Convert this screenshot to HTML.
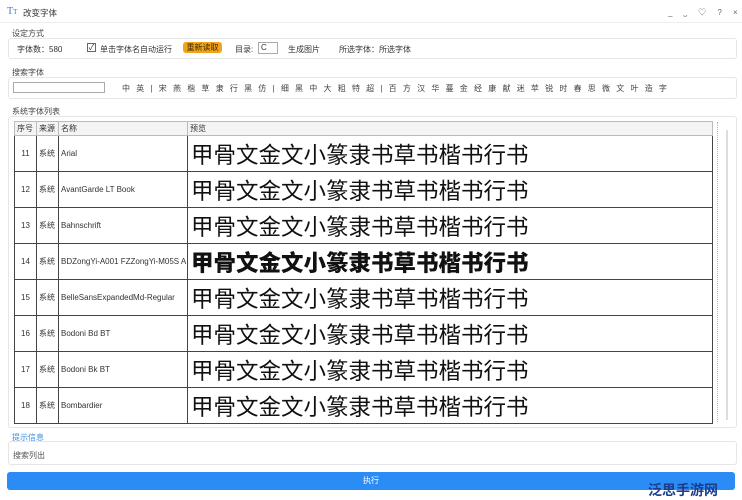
<!DOCTYPE html>
<html><head><meta charset="utf-8"><style>
*{margin:0;padding:0;box-sizing:border-box}
body{width:742px;height:500px;background:#fff;font-family:"Liberation Sans","Noto Sans CJK SC",sans-serif;font-size:8px;color:#333;position:relative;overflow:hidden}
.a{position:absolute}
.box{position:absolute;border:1px solid #e6e6e6;border-radius:3px;background:#fff}
.lbl{position:absolute;font-size:8px;color:#444;line-height:9px}
table{border-collapse:collapse;position:absolute;left:14px;top:121px;width:699px;table-layout:fixed}
td,th{border:1px solid #444;font-size:8px;font-weight:normal;text-align:left;white-space:nowrap;overflow:hidden;padding:0 2px}
th{height:14px;border-color:#bbb;background:#f4f4f4}
td{height:36px}
td.p{font-size:22.5px;letter-spacing:0;font-family:"Noto Sans CJK SC",sans-serif;padding-left:3px;line-height:34px;color:#111}
.c{text-align:center}
</style></head><body>
<div class="a" style="left:0;top:0;width:742px;height:23px;border-bottom:1px solid #eee"></div>
<div class="a" style="left:7px;top:6px;font-size:10px;color:#3a7bd5;font-family:'Liberation Serif',serif">T<span style="font-size:7px">T</span></div>
<div class="a" style="left:23px;top:7px;font-size:8.5px">改变字体</div>
<div class="a" style="left:668px;top:7px;font-size:8px;color:#666;word-spacing:9px">_ ⎵ ♡ ? ×</div>

<div class="lbl" style="left:12px;top:29px">设定方式</div>
<div class="box" style="left:8px;top:38px;width:729px;height:21px"></div>
<div class="a" style="left:17px;top:44px">字体数：580</div>
<div class="a" style="left:87px;top:43px;width:9px;height:9px;border:1px solid #666;font-size:8px;line-height:7px;text-align:center">✓</div>
<div class="a" style="left:100px;top:44px">单击字体名自动运行</div>
<div class="a" style="left:183px;top:42px;width:39px;height:11px;background:#f2a31c;border-radius:3px;color:#3a2a00;text-align:center;line-height:11px">重新读取</div>
<div class="a" style="left:235px;top:44px">目录:</div>
<div class="a" style="left:258px;top:42px;width:20px;height:12px;border:1px solid #aaa;padding-left:2px;line-height:10px">C</div>
<div class="a" style="left:288px;top:44px">生成图片</div>
<div class="a" style="left:339px;top:44px">所选字体：所选字体</div>

<div class="lbl" style="left:12px;top:68px">搜索字体</div>
<div class="box" style="left:8px;top:77px;width:729px;height:22px"></div>
<div class="a" style="left:13px;top:82px;width:92px;height:11px;border:1px solid #aaa"></div>
<div class="a" style="left:122px;top:83px;font-size:8px;word-spacing:4px;color:#444">中 英 | 宋 燕 楷 草 隶 行 黑 仿 | 细 黑 中 大 粗 特 超 | 百 方 汉 华 蔓 金 经 康 献 迷 苹 锐 时 春 思 微 文 叶 造 字</div>

<div class="lbl" style="left:12px;top:107px">系统字体列表</div>
<div class="box" style="left:8px;top:116px;width:729px;height:312px"></div>
<div class="a" style="left:717px;top:122px;width:3px;height:300px;border-left:1px dotted #bbb"></div>
<div class="a" style="left:726px;top:130px;width:2px;height:290px;background:#ddd"></div>
<table>
<colgroup><col style="width:22px"><col style="width:22px"><col style="width:129px"><col></colgroup>
<tr><th>序号</th><th>来源</th><th>名称</th><th>预览</th></tr>
<tr><td class="c">11</td><td>系统</td><td>Arial</td><td class="p">甲骨文金文小篆隶书草书楷书行书</td></tr>
<tr><td class="c">12</td><td>系统</td><td>AvantGarde LT Book</td><td class="p">甲骨文金文小篆隶书草书楷书行书</td></tr>
<tr><td class="c">13</td><td>系统</td><td>Bahnschrift</td><td class="p">甲骨文金文小篆隶书草书楷书行书</td></tr>
<tr><td class="c">14</td><td>系统</td><td>BDZongYi-A001 FZZongYi-M05S A</td><td class="p" style="font-weight:900">甲骨文金文小篆隶书草书楷书行书</td></tr>
<tr><td class="c">15</td><td>系统</td><td>BelleSansExpandedMd-Regular</td><td class="p">甲骨文金文小篆隶书草书楷书行书</td></tr>
<tr><td class="c">16</td><td>系统</td><td>Bodoni Bd BT</td><td class="p">甲骨文金文小篆隶书草书楷书行书</td></tr>
<tr><td class="c">17</td><td>系统</td><td>Bodoni Bk BT</td><td class="p">甲骨文金文小篆隶书草书楷书行书</td></tr>
<tr><td class="c">18</td><td>系统</td><td>Bombardier</td><td class="p">甲骨文金文小篆隶书草书楷书行书</td></tr>
</table>

<div class="lbl" style="left:12px;top:433px;color:#3a8ee6">提示信息</div>
<div class="box" style="left:8px;top:441px;width:729px;height:24px"></div>
<div class="a" style="left:13px;top:450px;color:#555">搜索列出</div>
<div class="a" style="left:7px;top:472px;width:728px;height:18px;background:#2b8cf6;border-radius:3px;color:#fff;text-align:center;line-height:18px">执行</div>
<div class="a" style="left:648px;top:480px;font-size:14px;font-weight:bold;color:#1a3d8f;font-family:'Noto Sans CJK SC',sans-serif">泛思手游网</div>
</body></html>
